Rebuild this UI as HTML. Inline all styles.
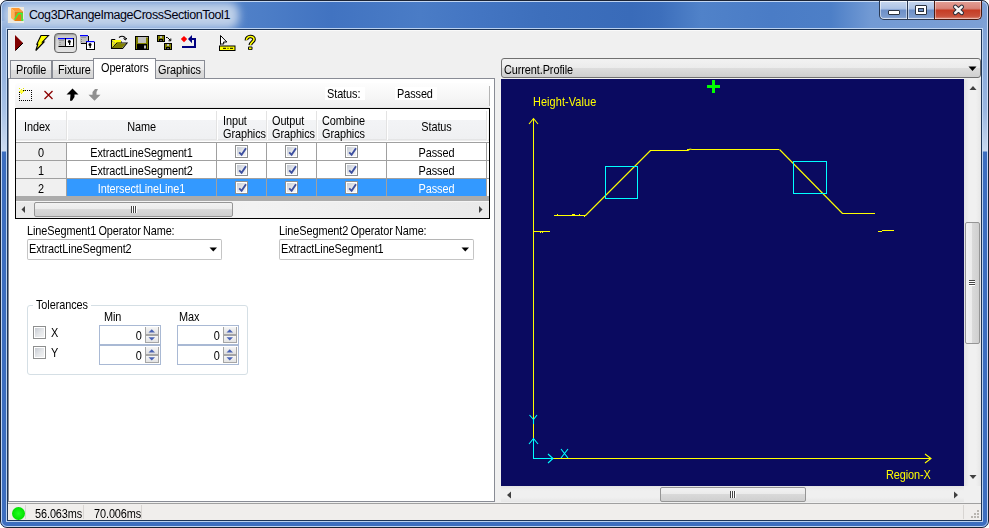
<!DOCTYPE html>
<html><head><meta charset="utf-8">
<style>
*{box-sizing:border-box;}
html,body{margin:0;padding:0;}
body{width:989px;height:528px;overflow:hidden;position:relative;background:#ffffff;font-family:"Liberation Sans",sans-serif;font-size:11px;color:#000;}
.a{position:absolute;}
.cb{width:13px;height:13px;border:1px solid #8e8f8f;background:#fff;}
.cb:before{content:"";position:absolute;left:1px;top:1px;width:9px;height:9px;background:linear-gradient(135deg,#c4cad3,#e6e8ec 55%,#f4f4f4);}
.cb svg{position:absolute;left:1px;top:0px;}
.cbx{width:13px;height:13px;border:1px solid #8e8f8f;background:#fff;}
.cbx:before{content:"";position:absolute;left:1px;top:1px;width:9px;height:9px;background:linear-gradient(135deg,#c8ccd2,#e4e6e9 55%,#f2f2f2);}
.nud{width:62px;height:20px;border:1px solid #a9b9d4;background:#fff;}
.sp{position:absolute;left:46px;width:13px;height:8px;border:1px solid #c5c5c5;background:linear-gradient(#f2f2f2,#dedede);}
.sp svg{position:absolute;left:-1px;top:0px;}
.t{position:absolute;white-space:nowrap;letter-spacing:-0.1px;line-height:13px;font-size:12.4px;transform:scaleX(0.88);transform-origin:0 0;}
.t[style*="text-align:center"]{transform-origin:50% 0;}
</style></head><body>
<!-- window frame -->
<div class="a" id="win" style="left:0;top:0;width:989px;height:528px;border:1px solid #1b2436;border-radius:7px;overflow:hidden;
background:linear-gradient(90deg,#7099d4 0px,#5f8ccd 120px,#4d7ec7 260px,#4173c1 330px,#4a7cc6 420px,#4476c3 470px,#3d6fbc 540px,#396bb9 630px,#3d6fbc 660px,#5082c9 700px,#4a7cc6 770px,#4d7fc7 830px,#729ad4 870px,#7da0d5 989px);">
<div class="a" style="left:2px;top:1px;width:236px;height:27px;background:rgba(200,215,236,0.92);border-radius:10px;filter:blur(4px);"></div>
<div class="a" style="left:0;top:20px;width:6px;height:506px;background:linear-gradient(#a3bde3 0,#8cacda 10px,#9ab7e1 60px,#a8c2e6 89px,#cddbf0 130px,#3d6ebf 131px,#3d6ebf 100%);"></div>
<div class="a" style="left:981px;top:19px;width:6px;height:507px;background:linear-gradient(#7da0d5 0,#88a9d9 40px,#9ab6e0 90px,#c8d8ee 131px,#3d6ebf 132px,#3d6ebf 100%);"></div>
<div class="a" style="left:0;top:520px;width:987px;height:6px;background:#3d6ebf;"></div>
<div class="a" style="left:0;top:0;width:987px;height:526px;border:1px solid rgba(215,230,250,0.85);border-radius:6px;"></div>
</div>
<!-- title -->
<svg class="a" style="left:0;top:0" width="989" height="60" viewBox="0 0 989 60">
<rect x="8" y="7" width="16" height="16" fill="#ede9df"/>
<polygon points="11,8 19,8 23,11.5 14.5,11.5" fill="#ff9a30"/>
<polygon points="11,8 14.5,11.5 14.5,21 11,18" fill="#ffb35a"/>
<rect x="14.5" y="11.5" width="8.5" height="9.5" fill="#e27c14"/>
<path d="M14.5 19.5 L18.5 13.5 L22 13.5 L22 20 L23.5 20" fill="none" stroke="#22ff44" stroke-width="1.3"/>
</svg>
<div class="t" style="left:29px;top:7px;font-size:12.5px;letter-spacing:-0.43px;transform:none;color:#000010;line-height:16px;">Cog3DRangeImageCrossSectionTool1</div>
<!-- caption buttons -->
<div class="a" style="left:879px;top:1px;width:29px;height:19px;border:1px solid #2a3a55;border-top:none;border-radius:0 0 0 5px;background:linear-gradient(#c6d6ee 0,#aec4e6 40%,#a3bce3 45%,#6d8fc7 50%,#7d9dcf 90%,#a9c1e6 100%);box-shadow:inset 0 1px 0 #f4f8fd,inset 1px 0 0 rgba(255,255,255,0.5),inset -1px 0 0 rgba(255,255,255,0.5),inset 0 -1px 0 rgba(255,255,255,0.55);"></div>
<div class="a" style="left:907px;top:1px;width:28px;height:19px;border:1px solid #2a3a55;border-top:none;border-right:none;background:linear-gradient(#c6d6ee 0,#aec4e6 40%,#a3bce3 45%,#6d8fc7 50%,#7d9dcf 90%,#a9c1e6 100%);box-shadow:inset 0 1px 0 #f4f8fd,inset 1px 0 0 rgba(255,255,255,0.5),inset -1px 0 0 rgba(255,255,255,0.5),inset 0 -1px 0 rgba(255,255,255,0.55);"></div>
<div class="a" style="left:934px;top:1px;width:48px;height:19px;border:1px solid #4a1a10;border-top:none;border-radius:0 0 5px 0;background:linear-gradient(#e3a096 0,#d9857a 40%,#d37566 45%,#c53c24 50%,#c9523c 85%,#dc9283 100%);box-shadow:inset 0 1px 0 #fbeeee,inset 1px 0 0 rgba(255,255,255,0.4),inset -1px 0 0 rgba(255,255,255,0.4),inset 0 -1px 0 rgba(255,220,210,0.6);"></div>
<div class="a" style="left:888px;top:10px;width:12px;height:5px;background:#fff;border:1px solid #2a3240;border-radius:1px;"></div>
<div class="a" style="left:915px;top:5px;width:12px;height:10px;background:#fff;border:1px solid #2a3240;border-radius:1px;"><div class="a" style="left:2px;top:2px;width:6px;height:4px;background:#6d8fc4;border:1px solid #2a3240;"></div></div>
<svg class="a" style="left:950px;top:3px" width="17" height="14" viewBox="0 0 17 14"><path d="M5.3 3.9 L11.7 9.9 M11.7 3.9 L5.3 9.9" stroke="#2a2e3a" stroke-width="4.6" stroke-linecap="round"/><path d="M5.3 3.9 L11.7 9.9 M11.7 3.9 L5.3 9.9" stroke="#f6f6f6" stroke-width="2.6" stroke-linecap="round"/></svg>

<!-- client -->
<div class="a" style="left:7px;top:29px;width:975px;height:492px;border:1px solid #1d3557;background:#f0f0f0;box-shadow:0 0 0 1px rgba(200,220,245,0.9);"></div>
<div class="a" style="left:8px;top:30px;width:973px;height:1px;background:#fafafa;"></div>

<!-- toolbar -->
<div class="a" style="left:54px;top:33px;width:23px;height:20px;border:1px solid #666;border-radius:4px;background:linear-gradient(#c2c2c2,#d6d6d6 40%,#e2e2e2);box-shadow:inset 1px 1px 1px rgba(0,0,0,0.2);"></div>
<svg class="a" style="left:0;top:0" width="300" height="60" viewBox="0 0 300 60" shape-rendering="geometricPrecision">
<!-- play -->
<polygon points="15,35 23,43 15,51" fill="#800000"/>
<path d="M23 43 L15.5 50.5" stroke="#000" stroke-width="1"/>
<!-- lightning -->
<polygon points="41,35.5 48.5,35.5 42.5,42 44,42 35.8,50.5 37.8,44.2 36.8,44.2" fill="#ffff00" stroke="#000" stroke-width="1.1" stroke-linejoin="miter"/>
<!-- pressed icon: two windows -->
<rect x="58.5" y="38" width="7" height="8.5" fill="#c0c0c0" stroke="#000" stroke-width="0"/>
<rect x="58" y="38" width="7.5" height="1.2" fill="#0000ff"/>
<rect x="59" y="40" width="5" height="0.8" fill="#909090"/>
<rect x="59.5" y="42" width="1" height="1" fill="#808080"/><rect x="59.5" y="44" width="1" height="1" fill="#808080"/>
<rect x="58.5" y="46" width="7" height="1" fill="#000"/>
<rect x="65.5" y="38" width="8" height="9" fill="#fff"/>
<rect x="65.5" y="38" width="8" height="1.2" fill="#0000ff"/>
<rect x="73" y="38" width="1" height="9" fill="#000"/><rect x="65" y="46" width="9" height="1" fill="#000"/><rect x="65" y="38" width="1" height="9" fill="#000"/>
<circle cx="69.3" cy="41.5" r="1.5" fill="#000"/><rect x="69" y="41" width="1.2" height="4" fill="#000"/>
<!-- overlap windows -->
<rect x="80" y="35" width="8" height="8.5" fill="#c0c0c0"/>
<rect x="80" y="35" width="8" height="1.2" fill="#0000ff"/>
<rect x="81" y="37" width="5" height="0.8" fill="#909090"/>
<rect x="81" y="39" width="1" height="1" fill="#808080"/><rect x="81" y="41" width="1" height="1" fill="#808080"/>
<rect x="88" y="36" width="1" height="7" fill="#000"/><rect x="81" y="43" width="5" height="1" fill="#000"/>
<rect x="86" y="41" width="8.5" height="8.5" fill="#fff"/>
<rect x="86" y="41" width="8.5" height="1.2" fill="#0000ff"/>
<rect x="94" y="42" width="1" height="8" fill="#000"/><rect x="86" y="49" width="9" height="1" fill="#000"/><rect x="86" y="42" width="1" height="8" fill="#000"/>
<circle cx="90" cy="44.5" r="1.5" fill="#000"/><rect x="89.6" y="44" width="1.2" height="4" fill="#000"/>
<!-- open folder -->
<path d="M111.5 39.5 L115 39.5 L116 41 L121 41 L121 43" fill="none" stroke="#000" stroke-width="1"/>
<rect x="112" y="40" width="9" height="8" fill="#ffff00"/>
<path d="M112 41 h1 v1 h1 v1 h1 M113 44 h1 v1 h1 M112 46 h1" stroke="#c0c080" stroke-width="0.8"/>
<path d="M111.5 39.5 L111.5 48.5 L122.5 48.5 L127 43 L117 43 L112.5 48" fill="none" stroke="#000" stroke-width="1.1"/>
<polygon points="113,48 117.3,43.5 126,43.5 122,48" fill="#808000"/>
<path d="M119 37.5 Q122 35 125 37.5 L125.3 39.5" fill="none" stroke="#000" stroke-width="1.1"/>
<path d="M123.5 38.5 L125.5 40 L126.8 38" fill="none" stroke="#000" stroke-width="1"/>
<!-- floppy -->
<rect x="135" y="36" width="14" height="14" fill="#000"/>
<rect x="136" y="37" width="12" height="12" fill="#808000"/>
<rect x="138" y="37" width="8" height="6" fill="#c0c0c0"/>
<rect x="146.5" y="37" width="1" height="1" fill="#c0c0c0"/>
<rect x="137" y="44" width="10" height="5" fill="#000"/>
<rect x="144" y="45.5" width="2" height="3" fill="#c0c0c0"/>
<!-- save as -->
<rect x="157" y="35" width="8" height="7" fill="#000"/>
<rect x="158" y="36" width="6" height="5" fill="#808000"/>
<rect x="160" y="36" width="2" height="2" fill="#c0c0c0"/><rect x="159" y="39" width="4" height="2" fill="#000"/><rect x="160.5" y="40" width="1" height="1" fill="#c0c0c0"/>
<rect x="164" y="43" width="8" height="7" fill="#000"/>
<rect x="165" y="44" width="6" height="5" fill="#808000"/>
<rect x="167" y="44" width="2" height="2" fill="#c0c0c0"/><rect x="166" y="47" width="4" height="2" fill="#000"/><rect x="167.5" y="48" width="1" height="1" fill="#c0c0c0"/>
<path d="M166 37.5 L167.5 37.5 L170.5 40.5 M168.5 40.8 L170.8 40.8 L170.8 38.5" fill="none" stroke="#000" stroke-width="1"/>
<!-- red dot blue arrow -->
<polygon points="184,36 187.2,39 184,42.2 180.8,39" fill="#ff0000"/>
<polygon points="188,39 192,35 192,43.2" fill="#000080"/>
<path d="M191 39 L195 39 L195 47 L182 47" fill="none" stroke="#000080" stroke-width="2"/>
<!-- cursor + bar -->
<polygon points="220.5,35.5 226.8,42 223.5,42 223.8,44 221.5,44 220.5,44.5" fill="#fff" stroke="#000" stroke-width="1"/>
<rect x="219.5" y="46" width="15.5" height="4.5" fill="#ffff00" stroke="#000" stroke-width="1"/>
<path d="M223 48.3 h3 M227.5 48.3 h1 M230 48.3 h3" stroke="#000" stroke-width="1"/>
<!-- help --><g transform="translate(0,0.2)">
<path d="M246.5 40 C246 35.5 254.5 35 254 39.5 C253.8 41.5 250.5 42 250.3 45" fill="none" stroke="#000" stroke-width="3.6"/>
<rect x="248" y="46.3" width="4.5" height="3.6" rx="1" fill="#000"/>
<path d="M246.5 40 C246 35.5 254.5 35 254 39.5 C253.8 41.5 250.5 42 250.3 45" fill="none" stroke="#ffff00" stroke-width="1.6"/>
<rect x="249" y="47.2" width="2.5" height="1.8" fill="#ffff00"/>
</g></svg>
<!-- tabs -->
<div class="a" style="left:10px;top:60px;width:42px;height:19px;border:1px solid #898c95;border-bottom:none;background:linear-gradient(#f3f3f3 0,#ebebeb 50%,#dddddd 51%,#d5d5d5 100%);"></div>
<div class="a" style="left:52px;top:60px;width:42px;height:19px;border:1px solid #898c95;border-bottom:none;background:linear-gradient(#f3f3f3 0,#ebebeb 50%,#dddddd 51%,#d5d5d5 100%);"></div>
<div class="a" style="left:155px;top:60px;width:50px;height:19px;border:1px solid #898c95;border-bottom:none;background:linear-gradient(#f3f3f3 0,#ebebeb 50%,#dddddd 51%,#d5d5d5 100%);"></div>
<div class="t" style="left:16px;top:64px;">Profile</div>
<div class="t" style="left:58px;top:64px;">Fixture</div>
<div class="t" style="left:158px;top:64px;">Graphics</div>
<!-- tab panel -->
<div class="a" id="tabpanel" style="left:8px;top:78px;width:487px;height:424px;background:#fff;border:1px solid #898c95;"></div>
<div class="a" style="left:93px;top:58px;width:63px;height:21px;border:1px solid #898c95;border-bottom:none;background:#fff;"></div>
<div class="t" style="left:101px;top:62px;">Operators</div>
<!-- operator toolstrip -->
<div class="a" style="left:15px;top:83px;width:475px;height:24px;border-radius:3px 0 0 3px;background:linear-gradient(#fdfdfd,#f6f6f6 60%,#efefef);box-shadow:0 1px 0 #e6e6e6;"></div>
<div class="a" style="left:489px;top:86px;width:1px;height:20px;background:#b4b4b4;"></div>
<svg class="a" style="left:0;top:0" width="120" height="110" viewBox="0 0 120 110">
<g fill="#000" shape-rendering="crispEdges"><rect x="23" y="90" width="1" height="1"/><rect x="25" y="90" width="1" height="1"/><rect x="27" y="90" width="1" height="1"/><rect x="29" y="90" width="1" height="1"/><rect x="31" y="90" width="1" height="1"/><rect x="19" y="100" width="1" height="1"/><rect x="21" y="100" width="1" height="1"/><rect x="23" y="100" width="1" height="1"/><rect x="25" y="100" width="1" height="1"/><rect x="27" y="100" width="1" height="1"/><rect x="29" y="100" width="1" height="1"/><rect x="31" y="100" width="1" height="1"/><rect x="19" y="92" width="1" height="1"/><rect x="19" y="94" width="1" height="1"/><rect x="19" y="96" width="1" height="1"/><rect x="19" y="98" width="1" height="1"/><rect x="31" y="90" width="1" height="1"/><rect x="31" y="92" width="1" height="1"/><rect x="31" y="94" width="1" height="1"/><rect x="31" y="96" width="1" height="1"/><rect x="31" y="98" width="1" height="1"/><rect x="31" y="100" width="1" height="1"/></g>
<g shape-rendering="crispEdges"><rect x="21" y="89" width="1" height="5" fill="#e8e800"/><rect x="19" y="91" width="5" height="1" fill="#e8e800"/><rect x="20" y="90" width="3" height="3" fill="#ffff40"/><rect x="23" y="88" width="1" height="1" fill="#e0e000"/><rect x="19" y="88" width="1" height="1" fill="#e0e000"/><rect x="24" y="90" width="1" height="1" fill="#d0d000"/></g>
<path d="M44.5 91 L52.5 99 M52.5 91 L44.5 99" stroke="#8b0000" stroke-width="1.3"/>
<polygon points="72.5,88.5 78.5,94.5 74.5,94.5 74.5,97 72,100.7 70,100.7 70.5,94.5 66.5,94.5" fill="#000"/>
<polygon points="94.5,100.7 100.5,94.7 96.5,94.7 96.5,92 98,89 95,89 92.5,92 92.5,94.7 88.5,94.7" fill="#909090"/>
</svg>
<div class="a" style="left:325px;top:87px;width:40px;height:13px;background:#fff;"></div>
<div class="a" style="left:395px;top:87px;width:42px;height:13px;background:#fff;"></div>
<div class="t" style="left:327px;top:88px;">Status:</div>
<div class="t" style="left:397px;top:88px;">Passed</div>
<!-- grid -->
<div class="a" style="left:15px;top:108px;width:475px;height:111px;border:1px solid #000;background:#ababab;overflow:hidden;">
 <div class="a" style="left:0;top:0;width:473px;height:33px;background:linear-gradient(#ffffff 0,#ffffff 11px,#f3f4f6 11px,#eff0f2 30px,#d9d9d9 31px,#ffffff 32px);"></div>
 <div class="a" style="left:0;top:33px;width:473px;height:1px;background:#a0a0a0;"></div>
 <div class="a" style="left:0;top:34px;width:473px;height:53px;background:#fff;"></div>
 <div class="a" style="left:0;top:34px;width:50px;height:53px;background:#f0f0f0;"></div>
 <div class="a" style="left:51px;top:70px;width:420px;height:17px;background:#3399ff;"></div>
 <div class="a" style="left:0;top:51px;width:473px;height:1px;background:#a0a0a0;"></div>
 <div class="a" style="left:0;top:69px;width:473px;height:1px;background:#a0a0a0;"></div>
<div class="a" style="left:50px;top:34px;width:1px;height:53px;background:#a0a0a0;"></div>
<div class="a" style="left:50px;top:2px;width:1px;height:29px;background:#e3e3e3;"></div><div class="a" style="left:51px;top:2px;width:1px;height:29px;background:#fff;"></div>
<div class="a" style="left:200px;top:34px;width:1px;height:53px;background:#a0a0a0;"></div>
<div class="a" style="left:200px;top:2px;width:1px;height:29px;background:#e3e3e3;"></div><div class="a" style="left:201px;top:2px;width:1px;height:29px;background:#fff;"></div>
<div class="a" style="left:250px;top:34px;width:1px;height:53px;background:#a0a0a0;"></div>
<div class="a" style="left:250px;top:2px;width:1px;height:29px;background:#e3e3e3;"></div><div class="a" style="left:251px;top:2px;width:1px;height:29px;background:#fff;"></div>
<div class="a" style="left:300px;top:34px;width:1px;height:53px;background:#a0a0a0;"></div>
<div class="a" style="left:300px;top:2px;width:1px;height:29px;background:#e3e3e3;"></div><div class="a" style="left:301px;top:2px;width:1px;height:29px;background:#fff;"></div>
<div class="a" style="left:370px;top:34px;width:1px;height:53px;background:#a0a0a0;"></div>
<div class="a" style="left:370px;top:2px;width:1px;height:29px;background:#e3e3e3;"></div><div class="a" style="left:371px;top:2px;width:1px;height:29px;background:#fff;"></div>
<div class="a" style="left:470px;top:34px;width:1px;height:53px;background:#a0a0a0;"></div>
<div class="a" style="left:470px;top:2px;width:1px;height:29px;background:#e3e3e3;"></div><div class="a" style="left:471px;top:2px;width:1px;height:29px;background:#fff;"></div>
</div>
<!-- grid header text -->
<div class="t" style="left:24px;top:121px;">Index</div>
<div class="t" style="left:67px;top:121px;width:149px;text-align:center;">Name</div>
<div class="t" style="left:223px;top:115px;">Input<br>Graphics</div>
<div class="t" style="left:272px;top:115px;">Output<br>Graphics</div>
<div class="t" style="left:322px;top:115px;">Combine<br>Graphics</div>
<div class="t" style="left:387px;top:121px;width:99px;text-align:center;">Status</div>
<div class="t" style="left:16px;top:145px;width:50px;text-align:center;line-height:17px;">0</div>
<div class="t" style="left:67px;top:145px;width:149px;text-align:center;line-height:17px;color:#000;">ExtractLineSegment1</div>
<div class="t" style="left:387px;top:145px;width:99px;text-align:center;line-height:17px;color:#000;">Passed</div>
<div class="a cb" style="left:235px;top:145px;"><svg width="11" height="11"><path d="M2.2 6.3 L4.6 8.8 L9 2.2" fill="none" stroke="#3d50a0" stroke-width="1.9"/></svg></div>
<div class="a cb" style="left:285px;top:145px;"><svg width="11" height="11"><path d="M2.2 6.3 L4.6 8.8 L9 2.2" fill="none" stroke="#3d50a0" stroke-width="1.9"/></svg></div>
<div class="a cb" style="left:345px;top:145px;"><svg width="11" height="11"><path d="M2.2 6.3 L4.6 8.8 L9 2.2" fill="none" stroke="#3d50a0" stroke-width="1.9"/></svg></div>
<div class="t" style="left:16px;top:163px;width:50px;text-align:center;line-height:17px;">1</div>
<div class="t" style="left:67px;top:163px;width:149px;text-align:center;line-height:17px;color:#000;">ExtractLineSegment2</div>
<div class="t" style="left:387px;top:163px;width:99px;text-align:center;line-height:17px;color:#000;">Passed</div>
<div class="a cb" style="left:235px;top:163px;"><svg width="11" height="11"><path d="M2.2 6.3 L4.6 8.8 L9 2.2" fill="none" stroke="#3d50a0" stroke-width="1.9"/></svg></div>
<div class="a cb" style="left:285px;top:163px;"><svg width="11" height="11"><path d="M2.2 6.3 L4.6 8.8 L9 2.2" fill="none" stroke="#3d50a0" stroke-width="1.9"/></svg></div>
<div class="a cb" style="left:345px;top:163px;"><svg width="11" height="11"><path d="M2.2 6.3 L4.6 8.8 L9 2.2" fill="none" stroke="#3d50a0" stroke-width="1.9"/></svg></div>
<div class="t" style="left:16px;top:181px;width:50px;text-align:center;line-height:17px;">2</div>
<div class="t" style="left:67px;top:181px;width:149px;text-align:center;line-height:17px;color:#fff;">IntersectLineLine1</div>
<div class="t" style="left:387px;top:181px;width:99px;text-align:center;line-height:17px;color:#fff;">Passed</div>
<div class="a cb" style="left:235px;top:181px;"><svg width="11" height="11"><path d="M2.2 6.3 L4.6 8.8 L9 2.2" fill="none" stroke="#3d50a0" stroke-width="1.9"/></svg></div>
<div class="a cb" style="left:285px;top:181px;"><svg width="11" height="11"><path d="M2.2 6.3 L4.6 8.8 L9 2.2" fill="none" stroke="#3d50a0" stroke-width="1.9"/></svg></div>
<div class="a cb" style="left:345px;top:181px;"><svg width="11" height="11"><path d="M2.2 6.3 L4.6 8.8 L9 2.2" fill="none" stroke="#3d50a0" stroke-width="1.9"/></svg></div>
<!-- grid hscroll -->
<div class="a" style="left:16px;top:201px;width:473px;height:17px;background:linear-gradient(90deg,#e9e9e9,#f2f2f2 50%,#e9e9e9);border-top:1px solid #f4f4f4;"></div>
<svg class="a" style="left:20px;top:205px" width="8" height="9"><polygon points="5,1 5,8 1.5,4.5" fill="#404040"/></svg>
<svg class="a" style="left:477px;top:205px" width="8" height="9"><polygon points="2,1 2,8 5.5,4.5" fill="#404040"/></svg>
<div class="a" style="left:34px;top:202px;width:199px;height:15px;border:1px solid #959595;border-radius:2px;background:linear-gradient(#f2f2f2,#ebebeb 45%,#d9d9d9 50%,#cfcfcf);"></div>
<div class="a" style="left:131px;top:206px;width:1px;height:7px;background:#444;box-shadow:2px 0 0 #444,4px 0 0 #444,1px 0 0 #fff,3px 0 0 #fff,5px 0 0 #fff;"></div>
<!-- combos -->
<div class="t" style="left:27px;top:225px;word-spacing:-0.9px;">LineSegment1 Operator Name:</div>
<div class="a" style="left:27px;top:239px;width:195px;height:21px;border:1px solid #c5c5c5;border-top-color:#b5b5b5;border-radius:2px;background:#fff;"></div>
<div class="t" style="left:29px;top:243px;">ExtractLineSegment2</div>
<svg class="a" style="left:209px;top:247px" width="9" height="5"><polygon points="0.5,0.5 8,0.5 4.25,4.5" fill="#000"/></svg>
<div class="t" style="left:279px;top:225px;word-spacing:-0.9px;">LineSegment2 Operator Name:</div>
<div class="a" style="left:279px;top:239px;width:195px;height:21px;border:1px solid #c5c5c5;border-top-color:#b5b5b5;border-radius:2px;background:#fff;"></div>
<div class="t" style="left:281px;top:243px;">ExtractLineSegment1</div>
<svg class="a" style="left:461px;top:247px" width="9" height="5"><polygon points="0.5,0.5 8,0.5 4.25,4.5" fill="#000"/></svg>
<!-- tolerances -->
<div class="a" style="left:27px;top:305px;width:221px;height:70px;border:1px solid #d5dfe5;border-radius:3px;"></div>
<div class="a" style="left:33px;top:298px;width:58px;height:13px;background:#fff;"></div>
<div class="t" style="left:36px;top:299px;">Tolerances</div>
<div class="t" style="left:104px;top:311px;">Min</div>
<div class="t" style="left:179px;top:311px;">Max</div>
<div class="a cbx" style="left:33px;top:326px;"></div>
<div class="a cbx" style="left:33px;top:346px;"></div>
<div class="t" style="left:51px;top:327px;">X</div>
<div class="t" style="left:51px;top:347px;">Y</div>
<div class="a nud" style="left:99px;top:325px;"><div class="t" style="right:18px;top:4px;transform-origin:100% 0;">0</div><svg class="a" style="left:45px;top:1px" width="14" height="16" viewBox="0 0 14 16"><defs><linearGradient id="sg" x1="0" y1="0" x2="0" y2="1"><stop offset="0" stop-color="#f6f6f6"/><stop offset="1" stop-color="#e0e0e0"/></linearGradient></defs><rect x="1" y="0" width="12" height="7" fill="url(#sg)"/><rect x="1" y="9" width="12" height="7" fill="url(#sg)"/><g fill="#a6a6a6" shape-rendering="crispEdges"><rect x="0" y="0" width="1" height="16"/><rect x="13" y="0" width="1" height="16"/><rect x="0" y="7" width="14" height="2"/><rect x="0" y="15" width="14" height="1"/></g><polygon points="3.5,5.5 10,5.5 6.75,2.3" fill="#4a63b4"/><polygon points="3.5,10.3 10,10.3 6.75,13.5" fill="#4a63b4"/></svg></div>
<div class="a nud" style="left:99px;top:345px;"><div class="t" style="right:18px;top:4px;transform-origin:100% 0;">0</div><svg class="a" style="left:45px;top:1px" width="14" height="16" viewBox="0 0 14 16"><defs><linearGradient id="sg" x1="0" y1="0" x2="0" y2="1"><stop offset="0" stop-color="#f6f6f6"/><stop offset="1" stop-color="#e0e0e0"/></linearGradient></defs><rect x="1" y="0" width="12" height="7" fill="url(#sg)"/><rect x="1" y="9" width="12" height="7" fill="url(#sg)"/><g fill="#a6a6a6" shape-rendering="crispEdges"><rect x="0" y="0" width="1" height="16"/><rect x="13" y="0" width="1" height="16"/><rect x="0" y="7" width="14" height="2"/><rect x="0" y="15" width="14" height="1"/></g><polygon points="3.5,5.5 10,5.5 6.75,2.3" fill="#4a63b4"/><polygon points="3.5,10.3 10,10.3 6.75,13.5" fill="#4a63b4"/></svg></div>
<div class="a nud" style="left:177px;top:325px;"><div class="t" style="right:18px;top:4px;transform-origin:100% 0;">0</div><svg class="a" style="left:45px;top:1px" width="14" height="16" viewBox="0 0 14 16"><defs><linearGradient id="sg" x1="0" y1="0" x2="0" y2="1"><stop offset="0" stop-color="#f6f6f6"/><stop offset="1" stop-color="#e0e0e0"/></linearGradient></defs><rect x="1" y="0" width="12" height="7" fill="url(#sg)"/><rect x="1" y="9" width="12" height="7" fill="url(#sg)"/><g fill="#a6a6a6" shape-rendering="crispEdges"><rect x="0" y="0" width="1" height="16"/><rect x="13" y="0" width="1" height="16"/><rect x="0" y="7" width="14" height="2"/><rect x="0" y="15" width="14" height="1"/></g><polygon points="3.5,5.5 10,5.5 6.75,2.3" fill="#4a63b4"/><polygon points="3.5,10.3 10,10.3 6.75,13.5" fill="#4a63b4"/></svg></div>
<div class="a nud" style="left:177px;top:345px;"><div class="t" style="right:18px;top:4px;transform-origin:100% 0;">0</div><svg class="a" style="left:45px;top:1px" width="14" height="16" viewBox="0 0 14 16"><defs><linearGradient id="sg" x1="0" y1="0" x2="0" y2="1"><stop offset="0" stop-color="#f6f6f6"/><stop offset="1" stop-color="#e0e0e0"/></linearGradient></defs><rect x="1" y="0" width="12" height="7" fill="url(#sg)"/><rect x="1" y="9" width="12" height="7" fill="url(#sg)"/><g fill="#a6a6a6" shape-rendering="crispEdges"><rect x="0" y="0" width="1" height="16"/><rect x="13" y="0" width="1" height="16"/><rect x="0" y="7" width="14" height="2"/><rect x="0" y="15" width="14" height="1"/></g><polygon points="3.5,5.5 10,5.5 6.75,2.3" fill="#4a63b4"/><polygon points="3.5,10.3 10,10.3 6.75,13.5" fill="#4a63b4"/></svg></div>
<!-- right chart -->
<div class="a" style="left:501px;top:58px;width:480px;height:20px;border:1px solid #707070;border-radius:3px;background:linear-gradient(#f2f2f2 0,#ebebeb 50%,#dddddd 51%,#cfcfcf 100%);"></div>
<div class="t" style="left:504px;top:64px;">Current.Profile</div>
<svg class="a" style="left:968px;top:66px" width="9" height="6"><polygon points="0.5,0.5 8.5,0.5 4.5,5" fill="#000"/></svg>
<div class="a" id="chart" style="left:501px;top:79px;width:463px;height:407px;background:#0a0a60;"></div>
<svg class="a" style="left:0;top:0" width="989" height="528" viewBox="0 0 989 528">
<g fill="none" stroke="#ffff00" stroke-width="1" shape-rendering="crispEdges">
<path d="M533.5 118.5 L533.5 438.5"/>
<path d="M553 458.5 L931 458.5"/>
<path d="M533 231.5 L550 231.5"/>
<path d="M554 215.5 L585.5 215.5"/>
<path d="M650 150.5 L688 150.5 M692 149.5 L779 149.5"/>
<path d="M842 213.5 L875 213.5"/>
<path d="M878 231.5 L882 231.5 M882 230.5 L894 230.5"/>
</g>
<g fill="none" stroke="#ffff00" stroke-width="1.1">
<path d="M529 124 L533.5 118.5 L538 124"/>
<path d="M925 454 L931 458.5 L925 463"/>
<path d="M585.5 215.5 L650.5 150.5"/>
<path d="M779.5 149.5 L842.5 213.5"/>
<path d="M688 150.5 L690 149 L692 149.5"/>
</g>
<g fill="none" stroke="#00ffff" stroke-width="1" shape-rendering="crispEdges">
<rect x="605.5" y="166.5" width="32" height="32"/>
<rect x="793.5" y="161.5" width="33" height="32"/>
<path d="M533.5 438 L533.5 458.5 L553 458.5"/>
</g>
<g fill="none" stroke="#00ffff" stroke-width="1.1">
<path d="M529 444 L533.5 438.5 L538 444"/>
<path d="M548 454 L553 458.5 L548 463"/>
<path d="M529.5 415 L533.5 419.5 L537 415 M533.5 419 L533.5 424"/>
<path d="M561 449 L568 458 M568 449 L561 458"/>
</g>
<g fill="#ffff00" shape-rendering="crispEdges">
<rect x="540" y="232" width="1" height="1"/><rect x="542" y="232" width="1" height="1"/>
<rect x="557" y="214" width="1" height="1"/><rect x="572" y="214" width="3" height="1"/><rect x="579" y="214" width="1" height="1"/><rect x="584" y="216" width="1" height="1"/>
<rect x="687" y="149" width="2" height="1"/>
</g>
<g fill="#00ff00" shape-rendering="crispEdges">
<rect x="712" y="80" width="3" height="13"/>
<rect x="707" y="85" width="13" height="3"/>
</g>
</svg>
<div class="t" style="left:533px;top:96px;color:#ffff00;letter-spacing:0.1px;">Height-Value</div>
<div class="t" style="left:886px;top:469px;color:#ffff00;letter-spacing:-0.1px;">Region-X</div>
<!-- vscroll -->
<div class="a" style="left:964px;top:79px;width:17px;height:407px;background:linear-gradient(90deg,#e3e3e3,#f0f0f0 30%,#f0f0f0 70%,#e6e6e6);"></div>
<svg class="a" style="left:968px;top:84px" width="10" height="8"><polygon points="1.5,6 8.5,6 5,2" fill="#404040"/></svg>
<svg class="a" style="left:968px;top:473px" width="10" height="8"><polygon points="1.5,2 8.5,2 5,6" fill="#404040"/></svg>
<div class="a" style="left:965px;top:222px;width:15px;height:122px;border:1px solid #959595;border-radius:2px;background:linear-gradient(90deg,#f2f2f2,#ebebeb 45%,#d9d9d9 50%,#cfcfcf);"></div>
<div class="a" style="left:969px;top:280px;width:6px;height:1px;background:#444;box-shadow:0 2px 0 #444,0 4px 0 #444,0 1px 0 #fff,0 3px 0 #fff,0 5px 0 #fff;"></div>
<!-- hscroll -->
<div class="a" style="left:501px;top:486px;width:463px;height:16px;background:linear-gradient(#e3e3e3,#f0f0f0 30%,#f0f0f0 70%,#e6e6e6);"></div>
<div class="a" style="left:964px;top:486px;width:17px;height:16px;background:#f0f0f0;"></div>
<svg class="a" style="left:505px;top:490px" width="8" height="10"><polygon points="6,1.5 6,8.5 2,5" fill="#404040"/></svg>
<svg class="a" style="left:952px;top:490px" width="8" height="10"><polygon points="2,1.5 2,8.5 6,5" fill="#404040"/></svg>
<div class="a" style="left:660px;top:487px;width:146px;height:15px;border:1px solid #959595;border-radius:2px;background:linear-gradient(#f2f2f2,#ebebeb 45%,#d9d9d9 50%,#cfcfcf);"></div>
<div class="a" style="left:730px;top:491px;width:1px;height:7px;background:#444;box-shadow:2px 0 0 #444,4px 0 0 #444,1px 0 0 #fff,3px 0 0 #fff,5px 0 0 #fff;"></div>

<!-- status bar -->
<div class="a" style="left:8px;top:503px;width:973px;height:1px;background:#a0a0a0;"></div>
<div class="a" style="left:8px;top:504px;width:973px;height:16px;background:#f0eeec;"></div>
<div class="a" style="left:12px;top:507px;width:13px;height:13px;border-radius:50%;background:radial-gradient(circle at 50% 50%,#20ff20,#00e000 70%,#10a010);"></div>
<div class="a" style="left:25px;top:505px;width:1px;height:14px;background:#d8d5d2;"></div>
<div class="a" style="left:83px;top:505px;width:1px;height:14px;background:#d8d5d2;"></div>
<div class="a" style="left:141px;top:505px;width:1px;height:14px;background:#d8d5d2;"></div>
<div class="a" style="left:963px;top:505px;width:1px;height:14px;background:#d8d5d2;"></div>
<div class="t" style="left:35px;top:508px;">56.063ms</div>
<div class="t" style="left:94px;top:508px;">70.006ms</div>
<svg class="a" style="left:970px;top:509px" width="10" height="10"><g fill="#b8b5b0"><rect x="7" y="1" width="2" height="2"/><rect x="4" y="4" width="2" height="2"/><rect x="7" y="4" width="2" height="2"/><rect x="1" y="7" width="2" height="2"/><rect x="4" y="7" width="2" height="2"/><rect x="7" y="7" width="2" height="2"/></g></svg>
</body></html>
